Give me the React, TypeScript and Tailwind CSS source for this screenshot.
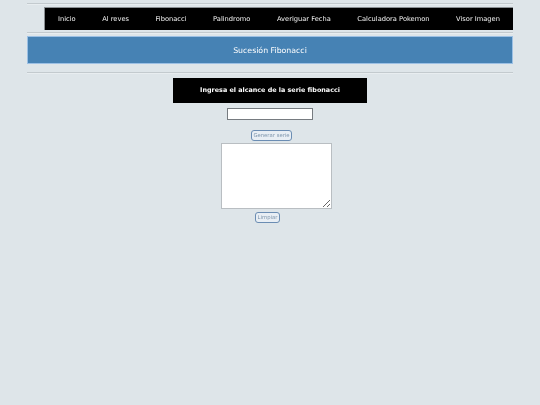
import { useState } from 'react'

const links = ['Inicio', 'Al reves', 'Fibonacci', 'Palindromo', 'Averiguar Fecha', 'Calculadora Pokemon', 'Visor Imagen']

function Rule({ className = '' }: { className?: string }) {
  return <div className={`h-[2px] w-full border-t border-[#c3cace] bg-[#e8edf0] ${className}`} />
}

export default function App() {
  const [limit, setLimit] = useState('')
  const [result, setResult] = useState('')

  function generate() {
    const n = parseInt(limit, 10)
    if (!n || n < 1) return
    const seq: number[] = []
    let a = 0
    let b = 1
    for (let i = 0; i < n; i++) {
      seq.push(a)
      ;[a, b] = [b, a + b]
    }
    setResult(seq.join(', '))
  }

  return (
    <main className="min-h-screen bg-[#dee5e9] pt-[3px] font-['DejaVu_Sans',Verdana,sans-serif] will-change-transform">
      <div className="ml-[27px] flex w-[486px] flex-col">
        <Rule />

        <nav className="ml-[17px] mt-[2px] flex h-[23px] items-center justify-between border-l border-t border-[#8a8f93] bg-black pl-[1px] pr-[1px]">
          {links.map((link) => (
            <a key={link} className="whitespace-nowrap px-[12px] text-[6.7px] text-[#f2f2f2]" href="#">
              {link}
            </a>
          ))}
        </nav>

        <Rule className="mt-[2px]" />

        <h1 className="mt-[2px] flex h-[28px] items-center justify-center border border-[#9cc0e4] bg-[#4682b4] pt-[2px] text-[7.8px] text-white">
          Sucesión Fibonacci
        </h1>

        <Rule className="mt-[8px]" />

        <div className="mt-[4px] flex flex-col items-center">
          <div className="flex h-[25px] w-[194px] items-center justify-center bg-black pt-[1px] text-[6.4px] font-bold text-white">
            Ingresa el alcance de la serie fibonacci
          </div>

          <input
            className="mt-[5px] h-[12px] w-[86px] border border-[#767b80] bg-white px-1 text-[6px] outline-none"
            value={limit}
            onChange={(event) => setLimit(event.target.value)}
          />

          <button
            className="mt-[10px] ml-[3px] h-[11px] w-[41px] rounded-[3px] border border-[#6b8db3] bg-[#e8eef4] text-[5.3px] leading-none text-[#7f96ad]"
            type="button"
            onClick={generate}
          >
            Generar serie
          </button>

          <textarea
            className="mt-[2px] ml-[13px] h-[66px] w-[111px] border border-[#b9bec2] bg-white p-1 text-[6px] outline-none"
            value={result}
            readOnly
          />

          <button
            className="mt-[3px] ml-[-5px] h-[11px] w-[25px] rounded-[3px] border border-[#6b8db3] bg-[#e8eef4] text-[5.3px] leading-none text-[#7f96ad]"
            type="button"
            onClick={() => {
              setLimit('')
              setResult('')
            }}
          >
            Limpiar
          </button>
        </div>
      </div>
    </main>
  )
}
